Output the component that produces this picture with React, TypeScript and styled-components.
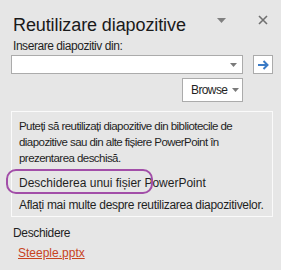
import styled, { createGlobalStyle } from 'styled-components';

const GlobalStyle = createGlobalStyle`
  html, body {
    margin: 0;
    padding: 0;
    background: #e6e6e6;
  }
  body {
    font-family: "Liberation Sans", Arial, sans-serif;
    color: #1f1f1f;
  }
`;

const Panel = styled.div`
  width: 281px;
  height: 270px;
  box-sizing: border-box;
  padding: 0 8px 0 11px;
  background: #e6e6e6;
  display: flex;
  flex-direction: column;
`;

const Header = styled.div`
  display: flex;
  align-items: flex-start;
  margin-top: 14px;
  height: 22px;
`;

const Title = styled.h1`
  flex: 1;
  margin: 0 0 0 2px;
  font-size: 18px;
  line-height: 22px;
  font-weight: normal;
  letter-spacing: -0.1px;
  white-space: nowrap;
  color: #1a1a1a;
`;

const PaneMenu = styled.div`
  width: 9px;
  height: 5px;
  margin: 4px 32px 0 0;
  flex: none;
  background: #808080;
  clip-path: polygon(0 0, 100% 0, 50% 100%);
`;

const CloseIcon = styled.svg`
  display: block;
  flex: none;
  margin: 1px 5px 0 0;
`;

const Label = styled.div`
  margin: 3px 0 0 2px;
  font-size: 12px;
  line-height: 14px;
  letter-spacing: -0.45px;
`;

const InputRow = styled.div`
  display: flex;
  gap: 10px;
  margin-top: 2px;
`;

const Combo = styled.div`
  width: 232px;
  height: 19px;
  box-sizing: border-box;
  background: #fff;
  border: 1px solid #ababab;
  display: flex;
  justify-content: flex-end;
  align-items: center;
  padding-right: 5px;
`;

const GoButton = styled.div`
  width: 20px;
  height: 19px;
  box-sizing: border-box;
  background: #fff;
  border: 1px solid #ababab;
  display: flex;
  align-items: center;
  justify-content: center;
`;

const BrowseRow = styled.div`
  display: flex;
  justify-content: flex-end;
  padding-right: 30px;
  margin-top: 4px;
`;

const BrowseButton = styled.div`
  width: 61px;
  height: 24px;
  box-sizing: border-box;
  background: #fff;
  border: 1px solid #ababab;
  padding: 0 3px 0 8px;
  display: flex;
  align-items: center;
  justify-content: space-between;
  font-size: 12px;
  letter-spacing: -0.6px;
  color: #1f1f1f;
`;

const InfoBox = styled.div`
  margin-top: 9px;
  border: 1px solid #fafafa;
  padding: 6px 4px 0 7px;
  height: 106px;
  box-sizing: border-box;
`;

const InfoText = styled.p`
  margin: 0;
  font-size: 11.5px;
  line-height: 16px;
  letter-spacing: -0.55px;
`;

const InfoLink = styled.div`
  position: relative;
  font-size: 12px;
  line-height: 22px;
  letter-spacing: -0.3px;
  white-space: nowrap;
  &:first-of-type {
    margin-top: 6px;
  }
`;

const OpenFileLink = styled.span`
  letter-spacing: 0;
`;

const Highlight = styled.span`
  position: absolute;
  left: -13px;
  top: -3px;
  width: 147px;
  height: 25px;
  box-sizing: border-box;
  border: 2px solid #a24ea8;
  border-radius: 10px;
  pointer-events: none;
`;

const SectionTitle = styled.div`
  margin: 9px 0 0 2px;
  font-size: 12px;
  line-height: 14px;
  letter-spacing: -0.35px;
`;

const RecentFile = styled.a`
  margin: 6px 0 0 7px;
  font-size: 12px;
  line-height: 14px;
  color: #c8431f;
  text-decoration: underline;
  align-self: flex-start;
`;

const Caret = ({ color = '#7a7a7a' }: { color?: string }) => (
  <svg width="7" height="4" viewBox="0 0 7 4">
    <path d="M0 0h7L3.5 4z" fill={color} />
  </svg>
);

export default function App() {
  return (
    <>
      <GlobalStyle />
      <Panel>
        <Header>
          <Title>Reutilizare diapozitive</Title>
          <PaneMenu />
          <CloseIcon width="10" height="10" viewBox="0 0 10 10">
            <path d="M1 1l8 8M9 1l-8 8" stroke="#707070" strokeWidth="1.6" />
          </CloseIcon>
        </Header>
        <Label>Inserare diapozitiv din:</Label>
        <InputRow>
          <Combo>
            <Caret />
          </Combo>
          <GoButton>
            <svg width="11" height="10" viewBox="0 0 11 10">
              <path d="M0 5h8.5" stroke="#3b7bc6" strokeWidth="2" />
              <path d="M5.5 1l4 4-4 4" stroke="#3b7bc6" strokeWidth="2" fill="none" />
            </svg>
          </GoButton>
        </InputRow>
        <BrowseRow>
          <BrowseButton>
            <span>Browse</span>
            <Caret />
          </BrowseButton>
        </BrowseRow>
        <InfoBox>
          <InfoText>
            Puteți să reutilizați diapozitive din bibliotecile de diapozitive sau din alte fișiere
            PowerPoint în prezentarea deschisă.
          </InfoText>
          <InfoLink>
            <OpenFileLink>Deschiderea unui fișier PowerPoint</OpenFileLink>
            <Highlight />
          </InfoLink>
          <InfoLink>Aflați mai multe despre reutilizarea diapozitivelor.</InfoLink>
        </InfoBox>
        <SectionTitle>Deschidere</SectionTitle>
        <RecentFile>Steeple.pptx</RecentFile>
      </Panel>
    </>
  );
}
